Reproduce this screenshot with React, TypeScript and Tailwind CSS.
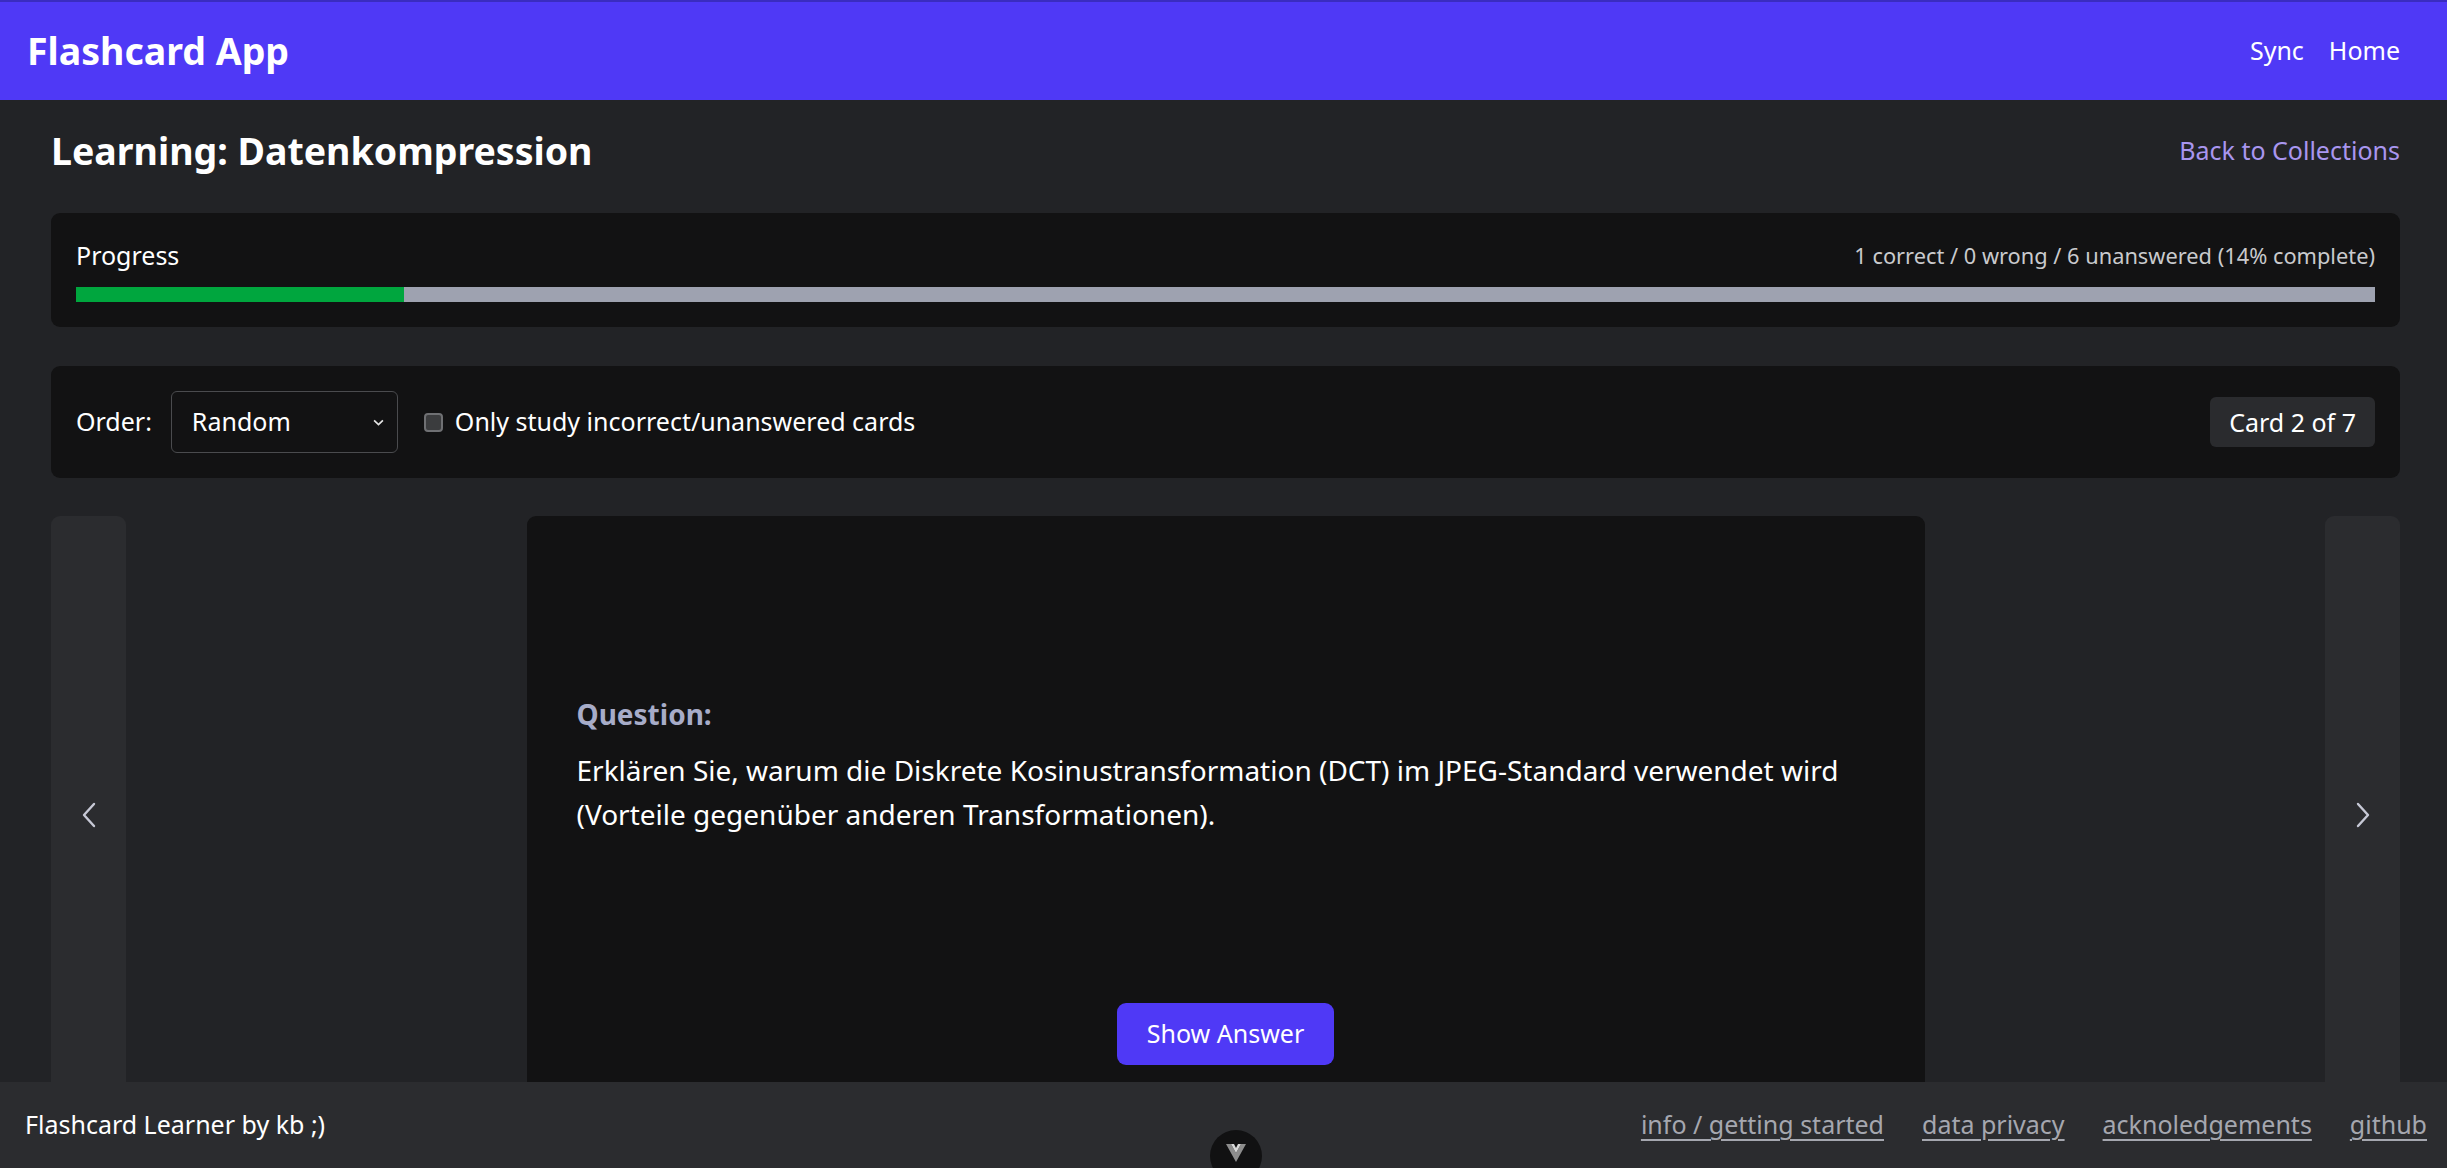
import { useState } from "react";

const FOOTER_LINKS = [
  "info / getting started",
  "data privacy",
  "acknoledgements",
  "github",
];

const stats = { correct: 1, wrong: 0, unanswered: 6 };

function Chevron({ dir }: { dir: "left" | "right" }) {
  return (
    <svg
      viewBox="0 0 16 26"
      className="h-[26px] w-[16px]"
      fill="none"
      stroke="#c7c9d6"
      strokeWidth="2.4"
      strokeLinecap="round"
      strokeLinejoin="round"
    >
      {dir === "left" ? <path d="M13 2 3 13l10 11" /> : <path d="M3 2l10 11L3 24" />}
    </svg>
  );
}

export default function App() {
  const [order, setOrder] = useState("random");
  const [onlyWrong, setOnlyWrong] = useState(false);
  const total = stats.correct + stats.wrong + stats.unanswered;
  const ratio = stats.correct / total;
  const pct = Math.round(ratio * 100);

  return (
    <div className="relative flex h-[1168px] flex-col overflow-hidden bg-[#222326] font-['Noto_Sans',sans-serif] text-white">
      <header className="flex h-[100px] shrink-0 items-center justify-between border-t-2 border-[#3a2cc0] bg-[#4f39f6] pl-[27px] pr-[47px]">
        <h1 className="text-[37.5px] font-bold leading-[50px]">Flashcard App</h1>
        <nav className="flex gap-[25px] text-[25px]">
          <a>Sync</a>
          <a>Home</a>
        </nav>
      </header>

      <main className="flex min-h-0 flex-1 flex-col pl-[51px] pr-[47px] pt-[26px]">
        <div className="flex h-[50px] items-center justify-between">
          <h2 className="text-[37.5px] font-bold leading-[50px]">
            Learning: Datenkompression
          </h2>
          <a className="text-[25px] text-[#a996ef]">Back to Collections</a>
        </div>

        <section className="mt-[37px] rounded-[9px] bg-[#121213] px-[25px] pb-[25px] pt-[24px]">
          <div className="flex h-[38px] items-center justify-between">
            <span className="text-[25px]">Progress</span>
            <span className="text-[21.8px] text-[#c9cacd]">
              {stats.correct} correct / {stats.wrong} wrong / {stats.unanswered} unanswered (
              {pct}% complete)
            </span>
          </div>
          <div className="mt-[12px] flex h-[15px] bg-[#9ea2b0]">
            <div className="bg-[#00a63e]" style={{ width: `${ratio * 100}%` }} />
          </div>
        </section>

        <section className="mt-[39px] flex items-center justify-between rounded-[9px] bg-[#121213] px-[25px] py-[25px]">
          <div className="flex items-center">
            <label className="text-[25px]">Order:</label>
            <div className="relative ml-[19px]">
              <select
                value={order}
                onChange={(e) => setOrder(e.target.value)}
                className="h-[62px] w-[227px] appearance-none rounded-[6px] border-[1.5px] border-[#4a4b4e] bg-[#121213] pl-[20px] text-[25px] text-white outline-none"
              >
                <option value="random">Random</option>
                <option value="sequential">Sequential</option>
              </select>
              <svg
                viewBox="0 0 10 6"
                className="pointer-events-none absolute right-[14px] top-[28px] h-[7px] w-[11px]"
                fill="none"
                stroke="#e5e5e5"
                strokeWidth="1.5"
              >
                <path d="M1 1l4 4 4-4" />
              </svg>
            </div>
            <label className="ml-[26px] flex items-center gap-[12px] text-[25px]">
              <input
                type="checkbox"
                checked={onlyWrong}
                onChange={(e) => setOnlyWrong(e.target.checked)}
                className="h-[19px] w-[19px] appearance-none rounded-[4px] border-2 border-[#6f7073] bg-[#3b3c3e]"
              />
              Only study incorrect/unanswered cards
            </label>
          </div>
          <span className="rounded-[6px] bg-[#2a2b2e] px-[19px] py-[6px] text-[25px] leading-[38px]">
            Card 2 of {total}
          </span>
        </section>

        <section className="mt-[38px] flex flex-1">
          <button className="flex w-[75px] shrink-0 items-center justify-center rounded-t-[9px] bg-[#2b2c2f] pb-[54px]">
            <Chevron dir="left" />
          </button>
          <div className="flex flex-1 justify-center">
            <div className="flex h-[620px] w-[1398px] flex-col rounded-t-[9px] bg-[#121213] p-[50px]">
              <div className="flex min-h-[396px] flex-col justify-center">
                <p className="text-[28px] font-bold leading-[44px] text-[#a7acc8]">
                  Question:
                </p>
                <p className="mt-[12px] text-[28px] leading-[44px]">
                  Erklären Sie, warum die Diskrete Kosinustransformation (DCT) im
                  JPEG-Standard verwendet wird (Vorteile gegenüber anderen
                  Transformationen).
                </p>
              </div>
              <div className="mt-[41px] flex justify-center">
                <button className="h-[62px] rounded-[9px] bg-[#4f39f6] px-[30px] text-[25px]">
                  Show Answer
                </button>
              </div>
            </div>
          </div>
          <button className="flex w-[75px] shrink-0 items-center justify-center rounded-t-[9px] bg-[#2b2c2f] pb-[54px]">
            <Chevron dir="right" />
          </button>
        </section>
      </main>

      <footer className="absolute inset-x-0 bottom-0 flex h-[86px] items-center justify-between bg-[#2b2c2f] pl-[25px] pr-[20px] text-[25px]">
        <span>Flashcard Learner by kb ;)</span>
        <div className="flex gap-[38px] text-[#a5a7af]">
          {FOOTER_LINKS.map((l) => (
            <a key={l} className="underline underline-offset-[5px]">
              {l}
            </a>
          ))}
        </div>
      </footer>

      <div className="absolute left-[1210px] top-[1130px] flex h-[52px] w-[52px] justify-center rounded-full bg-[#111112] pt-[14px]">
        <svg viewBox="0 0 20 18" className="h-[18px] w-[20px]">
          <path d="M0 0h5l5 9 5-9h5L10 18z" fill="#8d8d8d" />
          <path d="M5 0h3l2 4 2-4h3l-5 9z" fill="#d9d9d9" />
        </svg>
      </div>
    </div>
  );
}
